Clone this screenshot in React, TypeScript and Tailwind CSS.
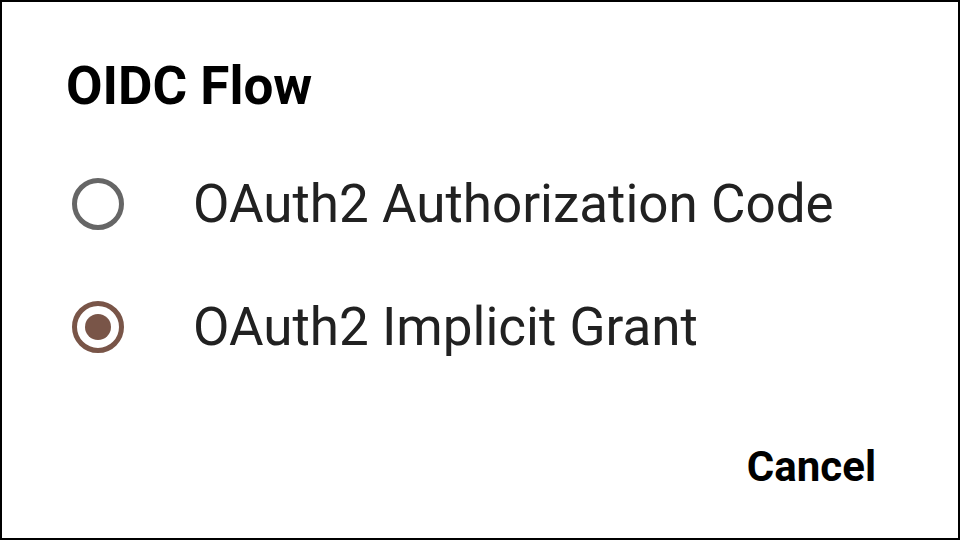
import { useState } from 'react';

const options = ['OAuth2 Authorization Code', 'OAuth2 Implicit Grant'];

export default function App() {
  const [selected, setSelected] = useState<number>(1);

  return (
    <div
      className="w-[960px] h-[540px] box-border border-2 border-black bg-white flex flex-col"
      style={{ fontFamily: 'Roboto, "Noto Sans", sans-serif' }}
    >
      <h2 className="pt-[54px] pl-[64px] text-[53px] leading-[60px] font-bold text-black">OIDC Flow</h2>

      <div className="mt-[26px] flex flex-col">
        {options.map((label, i) => {
          const checked = selected === i;
          return (
            <button
              key={label}
              onClick={() => setSelected(i)}
              className="h-[123px] flex items-center pl-[70px] text-left"
            >
              <span
                className={`w-[52px] h-[52px] rounded-full border-[5px] flex items-center justify-center shrink-0 ${
                  checked ? 'border-[#795548]' : 'border-[#666666]'
                }`}
              >
                {checked && <span className="w-[26px] h-[26px] rounded-full bg-[#795548]" />}
              </span>
              <span className="ml-[69px] text-[53px] leading-[60px] text-[#212121]">{label}</span>
            </button>
          );
        })}
      </div>

      <div className="mt-[55px] flex justify-end pr-[82px]">
        <button className="text-[42px] leading-[48px] font-bold text-black">Cancel</button>
      </div>
    </div>
  );
}
